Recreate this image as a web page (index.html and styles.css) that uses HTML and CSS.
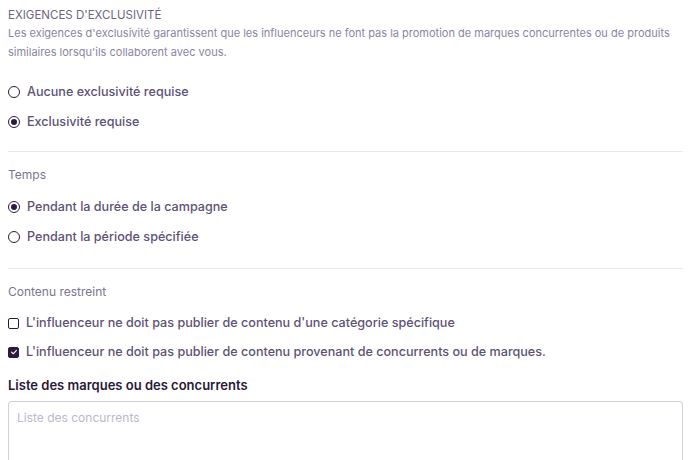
FILE: index.html
```html
<!DOCTYPE html>
<html lang="fr">
<head>
    <meta charset="UTF-8">
    <meta name="viewport" content="width=device-width, initial-scale=1.0">
    <title>Exigences d'exclusivité</title>
    <link rel="stylesheet" href="styles.css">
</head>
<body>

<div class="exclusivity">
    <!-- Intro -->
    <div class="section intro">
        <div class="title">EXIGENCES D'EXCLUSIVITÉ</div>
        <p class="desc">Les exigences d'exclusivité garantissent que les influenceurs ne font pas la promotion de marques concurrentes ou de produits similaires lorsqu'ils collaborent avec vous.</p>
        <div class="options">
            <label class="option"><span class="radio"></span>Aucune exclusivité requise</label>
            <label class="option"><span class="radio checked"></span>Exclusivité requise</label>
        </div>
    </div>

    <!-- Temps -->
    <div class="section">
        <div class="label">Temps</div>
        <div class="options">
            <label class="option"><span class="radio checked"></span>Pendant la durée de la campagne</label>
            <label class="option"><span class="radio"></span>Pendant la période spécifiée</label>
        </div>
    </div>

    <!-- Contenu restreint -->
    <div class="section last">
        <div class="label">Contenu restreint</div>
        <div class="options checks">
            <label class="option"><span class="box"></span>L'influenceur ne doit pas publier de contenu d'une catégorie spécifique</label>
            <label class="option"><span class="box checked">
                <svg viewBox="0 0 10 10" width="8" height="8"><path d="M2 5.2 L4.1 7.2 L8 3" fill="none" stroke="#fff" stroke-width="1.4" stroke-linecap="round" stroke-linejoin="round"/></svg>
            </span>L'influenceur ne doit pas publier de contenu provenant de concurrents ou de marques.</label>
        </div>
        <div class="field-title">Liste des marques ou des concurrents</div>
        <textarea class="field" placeholder="Liste des concurrents"></textarea>
    </div>
</div>

</body>
</html>
```

FILE: styles.css
```css
/* Basic Reset */
* {
    margin: 0;
    padding: 0;
    box-sizing: border-box;
}
body {
    font-family: Inter, "Noto Sans", sans-serif;
    background: #fff;
    color: #5e5274;
    padding: 0 5px 0 8px;
}
/* Sections */
.section {
    padding: 15px 0 22px;
    border-bottom: 1px solid #ebe9f0;
}
.section.intro {
    padding-top: 7px;
    padding-bottom: 20px;
}
.section.last {
    border-bottom: none;
    padding-bottom: 0;
}
.title {
    font-size: 11.5px;
    color: #6e6680;
    line-height: 16px;
}
.desc {
    font-size: 11px;
    color: #8c84a3;
    line-height: 19px;
    margin-top: 1px;
}
.label {
    font-size: 12px;
    color: #7c7490;
    line-height: 16px;
}
/* Radios and checkboxes */
.options {
    display: flex;
    flex-direction: column;
    gap: 12px;
    margin-top: 15px;
}
.intro .options {
    margin-top: 21px;
}
.options.checks {
    gap: 11px;
    margin-top: 14px;
}
.option {
    display: flex;
    align-items: center;
    gap: 7px;
    font-size: 12.6px;
    font-weight: 500;
    line-height: 18px;
    color: #5e5274;
}
.radio {
    width: 12px;
    height: 12px;
    border: 1.5px solid #2d1b3d;
    border-radius: 50%;
    display: flex;
    align-items: center;
    justify-content: center;
}
.radio.checked::after {
    content: "";
    width: 6px;
    height: 6px;
    border-radius: 50%;
    background: #2d1b3d;
}
.box {
    width: 11px;
    height: 11px;
    border: 1.5px solid #2d1b3d;
    border-radius: 2px;
    display: flex;
    align-items: center;
    justify-content: center;
}
.box.checked {
    background: #2d1b3d;
}
/* Field */
.field-title {
    font-size: 13px;
    font-weight: 600;
    color: #2a1836;
    margin-top: 15px;
    line-height: 18px;
}
.field {
    display: block;
    width: 100%;
    height: 60px;
    margin-top: 7px;
    border: 1px solid #d3cfdc;
    border-bottom: none;
    border-radius: 4px 4px 0 0;
    padding: 8px 8px;
    font-family: Inter, "Noto Sans", sans-serif;
    font-size: 12px;
    resize: none;
}
.field::placeholder {
    color: #bdb7cb;
}
```
